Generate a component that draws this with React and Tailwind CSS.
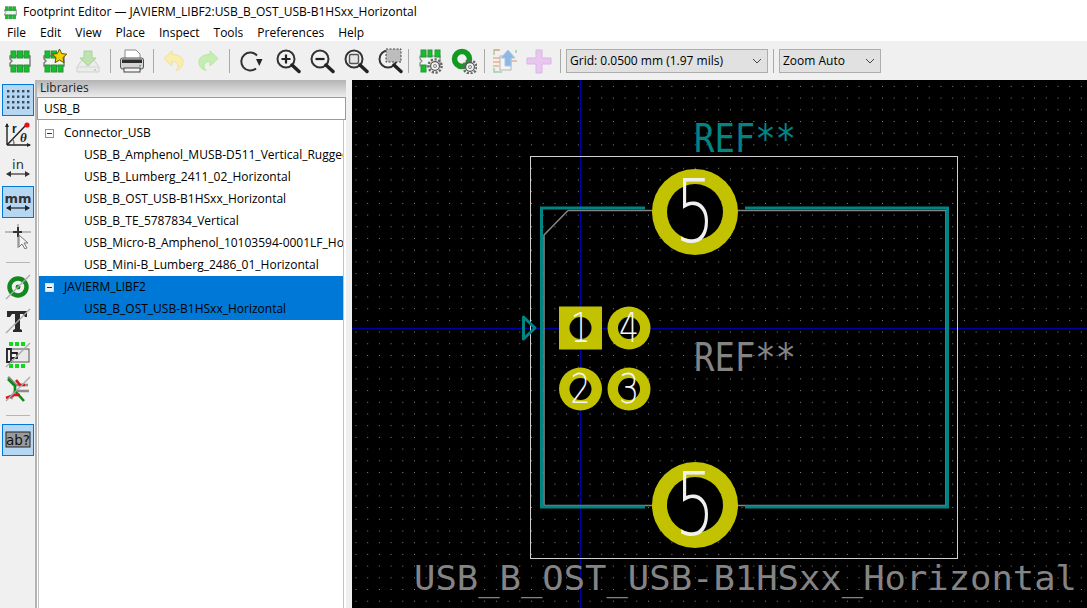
// KiCad footprint editor window
import React from 'react';

const menus = ['File', 'Edit', 'View', 'Place', 'Inspect', 'Tools', 'Preferences', 'Help'];

const rows = [
  { label: 'Connector_USB', lib: true },
  { label: 'USB_B_Amphenol_MUSB-D511_Vertical_Rugged' },
  { label: 'USB_B_Lumberg_2411_02_Horizontal' },
  { label: 'USB_B_OST_USB-B1HSxx_Horizontal' },
  { label: 'USB_B_TE_5787834_Vertical' },
  { label: 'USB_Micro-B_Amphenol_10103594-0001LF_Horizontal' },
  { label: 'USB_Mini-B_Lumberg_2486_01_Horizontal' },
  { label: 'JAVIERM_LIBF2', lib: true, selected: true },
  { label: 'USB_B_OST_USB-B1HSxx_Horizontal', selected: true },
];

function Ico({ children, w = 26, h = 26 }) {
  return <svg width={w} height={h} viewBox="0 0 26 26" fill="none">{children}</svg>;
}

function PadRow({ y, xs = [4, 10.5, 17] }) {
  return xs.map((x) => <rect key={x} x={x} y={y} width="5" height="7" fill="#12c12a" stroke="#2f8f3a" strokeWidth="1" />);
}

function FootprintIcon({ size = 26 }) {
  return (
    <Ico w={size} h={size}>
      <path d="M3 8h20v10H3v-3l2-2-2-2z" fill="#f4f4f4" stroke="#777" strokeWidth="1.4" />
      <PadRow y={3} />
      <PadRow y={17} />
    </Ico>
  );
}

function NewFootprintIcon() {
  return (
    <Ico>
      <path d="M3 8h20v10H3v-3l2-2-2-2z" fill="#f4f4f4" stroke="#777" strokeWidth="1.4" />
      <PadRow y={3} xs={[4, 10.5]} />
      <PadRow y={17} />
      <path d="M18.5 1l2.2 4.6 5 .6-3.7 3.4 1 5-4.5-2.5-4.5 2.5 1-5-3.7-3.4 5-.6z" fill="#f5d300" stroke="#5b5200" strokeWidth="1" />
    </Ico>
  );
}

function SaveIcon() {
  return (
    <Ico>
      <path d="M7 12L2 19v5h22v-5l-5-7z" fill="#ececec" stroke="#cfcfcf" />
      <path d="M2 19h22" stroke="#d5d5d5" />
      <path d="M9 3h8v7h4l-8 8-8-8h4z" fill="#bfe3b0" stroke="#a9d39a" />
      <rect x="19" y="21" width="2" height="1.5" fill="#9edb9e" />
    </Ico>
  );
}

function PrintIcon() {
  return (
    <Ico>
      <path d="M6 11V2h11l4 4v5z" fill="#fff" stroke="#8a8a8a" />
      <rect x="1.5" y="10" width="23" height="11" rx="2" fill="#d4d4d4" stroke="#555" />
      <rect x="3" y="11.5" width="20" height="3.5" fill="#2d2d2d" />
      <rect x="5" y="20" width="16" height="4" fill="#f4f4f4" stroke="#444" />
      <rect x="20" y="17" width="2" height="1.5" fill="#59c559" />
    </Ico>
  );
}

function UndoIcon({ flip, fill, stroke }) {
  return (
    <Ico>
      <g transform={flip ? 'translate(26 0) scale(-1 1)' : undefined}>
        <path d="M11 3L3 10.5l8 7.5v-4.5c4 0 6 2 6 4.5 0 2-1 3.5-2 4.5 4-1 7-4 7-8.5 0-5-5-7.5-11-7.5z" fill={fill} stroke={stroke} strokeWidth="1" />
      </g>
    </Ico>
  );
}

function RotateIcon() {
  return (
    <Ico>
      <path d="M18 7.5A9 9 0 1 0 17 20.5" stroke="#333" strokeWidth="2" />
      <path d="M17 11h6.5l-3.2 7z" fill="#222" />
    </Ico>
  );
}

function LensIcon({ children }) {
  return (
    <Ico>
      <circle cx="11" cy="11" r="8.5" stroke="#333" strokeWidth="2" fill="#f4f4f4" fillOpacity="0.4" />
      <path d="M17 17l7 6.5" stroke="#222" strokeWidth="3.4" strokeLinecap="round" />
      {children}
    </Ico>
  );
}

function Gear({ cx, cy }) {
  return (
    <g>
      <circle cx={cx} cy={cy} r="6.6" stroke="#666" strokeWidth="2.4" strokeDasharray="2.2 1.6" />
      <circle cx={cx} cy={cy} r="4.4" fill="#f4f4f4" stroke="#555" strokeWidth="1.2" />
      <circle cx={cx} cy={cy} r="1.6" fill="#ddd" stroke="#777" strokeWidth="0.8" />
    </g>
  );
}

function FootprintGearIcon() {
  return (
    <Ico>
      <path d="M3 8h20v10H3v-3l2-2-2-2z" fill="#f4f4f4" stroke="#888" strokeWidth="1.2" />
      <rect x="4" y="2" width="5" height="7" fill="#12c12a" stroke="#2f8f3a" />
      <rect x="11" y="2" width="4" height="7" fill="#12c12a" stroke="#2f8f3a" />
      <rect x="18" y="2" width="5" height="7" fill="#12c12a" stroke="#2f8f3a" />
      <rect x="4" y="17" width="5" height="7" fill="#12c12a" stroke="#2f8f3a" />
      <Gear cx={18} cy={18} />
    </Ico>
  );
}

function PadGearIcon() {
  return (
    <Ico>
      <circle cx="11" cy="11" r="7.5" stroke="#109a22" strokeWidth="5.5" />
      <circle cx="11" cy="11" r="2.5" fill="#f0f0f0" />
      <Gear cx={19} cy={19} />
    </Ico>
  );
}

function ImportIcon() {
  return (
    <Ico>
      <path d="M2 7V2h5M24 2v3M2 20v4h8" stroke="#9fd09f" strokeWidth="1.5" />
      <path d="M2 2h6" stroke="#e8a58f" strokeWidth="1.5" />
      <path d="M1 10h8M1 14h8M1 18h6M18 13h7" stroke="#ecae8a" strokeWidth="1.5" />
      <rect x="8" y="8" width="11" height="14" fill="#f4f4f4" stroke="#b5b5b5" />
      <path d="M16 2l7 8h-4v8h-6v-8H9z" fill="#8db8e3" stroke="#a8c6e6" />
    </Ico>
  );
}

function PlusIcon() {
  return (
    <Ico>
      <path d="M10 2h6v8h9v6h-9v9h-6v-9H1v-6h9z" fill="#e8c7ef" stroke="#dcb5e6" />
    </Ico>
  );
}

function Tool({ children }) {
  return <div className="w-[34px] h-[26px] flex items-center justify-center shrink-0">{children}</div>;
}

function Sep({ className = 'mx-[4px]' }) {
  return <div className={`w-px h-[24px] bg-[#a9a9a9] shrink-0 ${className}`} />;
}

function Chevron() {
  return (
    <svg width="10" height="6" viewBox="0 0 10 6" fill="none">
      <path d="M1 1l4 4 4-4" stroke="#444" strokeWidth="1" />
    </svg>
  );
}

function Dropdown({ label, className }) {
  return (
    <div className={`h-[24px] flex items-center justify-between pl-[3px] pr-[5px] bg-[#e1e1e1] border border-[#adadad] text-[12px] text-black shrink-0 ${className}`}>
      <span>{label}</span>
      <Chevron />
    </div>
  );
}

function TopBar() {
  return (
    <div className="h-[39px] bg-[#f0f0f0] flex items-center pl-[3px] shrink-0">
      <Tool><FootprintIcon /></Tool>
      <Tool><NewFootprintIcon /></Tool>
      <Tool><SaveIcon /></Tool>
      <Sep className="ml-[5px] mr-[4px]" />
      <Tool><PrintIcon /></Tool>
      <Sep className="ml-[4px] mr-[3px]" />
      <Tool><UndoIcon fill="#f9eeb0" stroke="#efe09a" /></Tool>
      <Tool><UndoIcon flip fill="#c5efb0" stroke="#b5e5a0" /></Tool>
      <Sep className="ml-[4px] mr-[5px]" />
      <Tool><RotateIcon /></Tool>
      <div className="w-[2px] shrink-0" />
      <Tool>
        <LensIcon>
          <path d="M11 6.5v9M6.5 11h9" stroke="#222" strokeWidth="2.2" />
        </LensIcon>
      </Tool>
      <Tool>
        <LensIcon>
          <path d="M6.5 11h9" stroke="#222" strokeWidth="2.2" />
        </LensIcon>
      </Tool>
      <Tool>
        <LensIcon>
          <rect x="6.5" y="6.5" width="9" height="9" rx="1.5" stroke="#555" strokeWidth="1.4" fill="#e4e4e4" />
        </LensIcon>
      </Tool>
      <Tool>
        <LensIcon>
          <rect x="9" y="1" width="15" height="13" fill="#bdbdbd" stroke="#444" strokeDasharray="2 1.5" />
        </LensIcon>
      </Tool>
      <Sep className="ml-[1px] mr-[4px]" />
      <Tool><FootprintGearIcon /></Tool>
      <Tool><PadGearIcon /></Tool>
      <Sep className="ml-[3px] mr-[3px]" />
      <Tool><ImportIcon /></Tool>
      <Tool><PlusIcon /></Tool>
      <Sep className="ml-[4px] mr-[5px]" />
      <Dropdown label="Grid: 0.0500 mm (1.97 mils)" className="w-[202px]" />
      <Sep className="ml-[5px] mr-[5px]" />
      <Dropdown label="Zoom Auto" className="w-[102px]" />
    </div>
  );
}

function Cut() {
  return <path d="M1 25L25 1" stroke="#a8a8a8" strokeWidth="1.2" />;
}

const sideTools = [
  {
    key: 'grid',
    y: 84,
    active: true,
    el: (
      <Ico>
        {[3, 8.5, 14, 19.5].map((y) => [2, 7, 12, 17, 22].map((x) => <rect key={`${x}-${y}`} x={x} y={y} width="2.4" height="2.4" fill="#3d4a55" />))}
      </Ico>
    ),
  },
  {
    key: 'polar',
    el: (
      <Ico>
        <path d="M2 24V3M2 24h23M2 24L21 4" stroke="#222" strokeWidth="1.4" />
        <path d="M0 6l2-4 2 4zM22 22l4 2-4 2z" fill="#222" />
        <path d="M9 24a8 8 0 0 0-1.5-6" stroke="#444" />
        <circle cx="22" cy="4" r="2.6" fill="#e81010" />
        <text x="7" y="12" fontFamily="'Liberation Sans', sans-serif" fontSize="12" fontWeight="700" fill="#222">r</text>
        <text x="15" y="21" fontFamily="'Liberation Serif', serif" fontSize="13" fontWeight="700" fontStyle="italic" fill="#222">θ</text>
      </Ico>
    ),
  },
  {
    key: 'in',
    el: (
      <Ico>
        <text x="13" y="14" textAnchor="middle" fontFamily="'DejaVu Sans', sans-serif" fontSize="13" fill="#333">in</text>
        <path d="M2 19h22" stroke="#333" strokeWidth="1.2" />
        <path d="M1 19l5-3v6zM25 19l-5-3v6z" fill="#333" />
      </Ico>
    ),
  },
  {
    key: 'mm',
    active: true,
    el: (
      <Ico>
        <text x="13" y="14" textAnchor="middle" fontFamily="'DejaVu Sans', sans-serif" fontSize="13" fontWeight="700" fill="#333">mm</text>
        <path d="M2 19h22" stroke="#222" strokeWidth="1.2" />
        <path d="M1 19l5-3v6zM25 19l-5-3v6z" fill="#222" />
      </Ico>
    ),
  },
  {
    key: 'cursor',
    el: (
      <Ico>
        <path d="M0 9h8M17 9h9M13 1v5M13 14v11" stroke="#aaa" strokeWidth="1.6" />
        <path d="M13 4v10M8 9h9" stroke="#333" strokeWidth="2" />
        <path d="M14 12v12l3-3 3 5 2-1-3-5h4z" fill="#f4f4f4" stroke="#777" />
      </Ico>
    ),
  },
  { key: 'sep1', sep: true },
  {
    key: 'pad',
    el: (
      <Ico>
        <circle cx="13" cy="13" r="8.5" stroke="#13881f" strokeWidth="4.5" />
        <circle cx="13" cy="13" r="3" fill="#13881f" stroke="#f0f0f0" strokeWidth="1" />
        <Cut />
      </Ico>
    ),
  },
  {
    key: 'text',
    el: (
      <Ico>
        <path d="M2 3h20v6h-2l-2-3h-3v15l2 1v2H8v-2l2-1V6H7L5 9H2z" fill="#2a2a2a" />
        <Cut />
      </Ico>
    ),
  },
  {
    key: 'fp',
    el: (
      <Ico>
        {[3, 9, 15].map((x) => <rect key={x} x={x + 1} y="0" width="4" height="4" fill="#10d81c" />)}
        {[3, 9, 15].map((x) => <rect key={`b${x}`} x={x + 1} y="22" width="4" height="4" fill="#10d81c" />)}
        <rect x="2" y="7" width="22" height="13" fill="#e8e8e8" stroke="#555" />
        <path d="M2 7h4v13H2zM6 11h6v5H6z" fill="#f2f2f2" stroke="#222" strokeWidth="1.8" />
        <Cut />
      </Ico>
    ),
  },
  {
    key: 'cross',
    el: (
      <Ico>
        <path d="M3 1l8 8h6l6 0M14 15h4l6 0M6 23l4-8h5" stroke="#8c8c8c" strokeWidth="2.6" />
        <path d="M3 3l7 7v5l9 10" stroke="#0e8a17" strokeWidth="2.6" />
        <path d="M11 4l4 5h5M1 22l8-3h6" stroke="#d81818" strokeWidth="2.6" />
        <Cut />
      </Ico>
    ),
  },
  { key: 'sep2', sep: true },
  {
    key: 'ab',
    active: true,
    el: (
      <Ico>
        <rect x="1" y="5" width="24" height="15" fill="#9a9a9a" stroke="#222" />
        <text x="13" y="18" textAnchor="middle" fontFamily="'DejaVu Sans', sans-serif" fontSize="13.5" fill="#111">ab?</text>
      </Ico>
    ),
  },
];

function SideBar() {
  return (
    <div className="w-[35px] bg-[#f0f0f0] flex flex-col items-center pt-[4px] shrink-0 border-r-0">
      {sideTools.map((t) => {
        if (t.sep) return <div key={t.key} className="w-[24px] h-px bg-[#b5b5b5] my-[8px] ml-[1px]" />;
        return (
          <div
            key={t.key}
            className={`w-[32px] h-[32px] mb-[2px] flex items-center justify-center shrink-0 border ${t.active ? 'bg-[#b5d7f3] border-[#0078d7]' : 'border-transparent'}`}
          >
            {t.el}
          </div>
        );
      })}
    </div>
  );
}

function TreeRow({ label, lib, selected }) {
  return (
    <div className={`h-[22px] flex items-center whitespace-nowrap overflow-hidden text-[12px] text-black ${selected ? 'bg-[#0078d7]' : ''} ${lib ? 'pl-[6px]' : 'pl-[45px]'}`}>
      {lib && (
        <span className={`w-[9px] h-[9px] border flex items-center justify-center mr-[10px] shrink-0 ${selected ? 'border-[#d8d8d8] bg-[#f0f0f0]' : 'border-[#8a94a6] bg-white'}`}>
          <span className="w-[5px] h-px bg-[#333]" />
        </span>
      )}
      {label}
    </div>
  );
}

function LibraryPanel() {
  return (
    <div className="w-[309px] flex flex-col bg-white shrink-0">
      <div className="h-[17px] bg-gradient-to-b from-[#b4b4b4] to-[#ececec] text-[12px] text-[#222] pl-[3px] leading-[15px]">Libraries</div>
      <div className="h-[23px] border border-[#9a9a9a] bg-white flex items-center pl-[6px] text-[12px] text-black">USB_B</div>
      <div className="flex-1 mr-[2px] ml-px pt-[2px] border-x border-[#c4c4c4] overflow-hidden">
        {rows.map((r, i) => <TreeRow key={i} {...r} />)}
      </div>
    </div>
  );
}

const stroke = { fontFamily: "'DejaVu Sans Mono', monospace" };

function BigPad({ cy }) {
  return (
    <g>
      <circle cx="695" cy={cy} r="43" fill="#c2c200" />
      <circle cx="695" cy={cy} r="28" fill="#000" />
      <text x="695" y={cy + 30} textAnchor="middle" fontFamily="'DejaVu Sans', sans-serif" fontWeight="200" fontSize="88" fill="#f0f0f0" textLength="40" lengthAdjust="spacingAndGlyphs">5</text>
    </g>
  );
}

function SmallPad({ cx, cy, n, square }) {
  return (
    <g>
      {square
        ? <rect x={cx - 21.5} y={cy - 21.5} width="43" height="43" fill="#c2c200" />
        : <circle cx={cx} cy={cy} r="21.5" fill="#c2c200" />}
      <circle cx={cx} cy={cy} r="11" fill="#000" />
      <text x={cx} y={cy + 14} textAnchor="middle" fontFamily="'DejaVu Sans', sans-serif" fontWeight="200" fontSize="40" fill="#f5f5f5" textLength="20" lengthAdjust="spacingAndGlyphs">{n}</text>
    </g>
  );
}

function Canvas() {
  return (
    <div className="flex-1 bg-black overflow-hidden">
      <svg width="735" height="528" viewBox="352 80 735 528" className="block">
        <defs>
          <pattern id="grid" x="519.3" y="121" width="11.7" height="11.7" patternUnits="userSpaceOnUse">
            <rect width="1" height="1" fill="#8a8a8a" shapeRendering="crispEdges" />
          </pattern>
        </defs>
        <rect x="352" y="80" width="735" height="528" fill="url(#grid)" />
        <path d="M580.5 80V608M352 328.5H1087" stroke="#0000a8" strokeWidth="1" />
        <rect x="530.5" y="156.5" width="427" height="402" stroke="#d0d0d0" fill="none" />
        {/* fab layer */}
        <path d="M568 210.5H946V505.5H544V235L568 210.5" stroke="#848484" strokeWidth="1.6" fill="none" />
        {/* silkscreen */}
        <path d="M645 208H541.5V507H645M745 208H947.5V507H745" stroke="#008484" strokeWidth="3" fill="none" />
        <path d="M523.5 317L535 328L523.5 339Z" stroke="#008484" strokeWidth="3" fill="none" strokeLinejoin="round" />
        <BigPad cy={212} />
        <BigPad cy={505} />
        <SmallPad cx={580.5} cy={328} n="1" square />
        <SmallPad cx={629} cy={328} n="4" />
        <SmallPad cx={580.5} cy={389} n="2" />
        <SmallPad cx={629} cy={389} n="3" />
        <text x="694" y="152" {...stroke} fontSize="39" fill="#008484" textLength="102" lengthAdjust="spacingAndGlyphs">REF**</text>
        <text x="694" y="371" {...stroke} fontSize="39" fill="#848484" textLength="102" lengthAdjust="spacingAndGlyphs">REF**</text>
        <text x="414" y="590" {...stroke} fontSize="34" fill="#848484" textLength="663" lengthAdjust="spacingAndGlyphs">USB_B_OST_USB-B1HSxx_Horizontal</text>
      </svg>
    </div>
  );
}

export default function App() {
  return (
    <div className="w-[1087px] h-[608px] flex flex-col overflow-hidden bg-white font-['Open_Sans',sans-serif]">
      <div className="h-[24px] flex items-center pl-[3px] gap-[5px] text-[12px] text-black shrink-0">
        <FootprintIcon size={15} />
        <span>Footprint Editor — JAVIERM_LIBF2:USB_B_OST_USB-B1HSxx_Horizontal</span>
      </div>
      <div className="h-[17px] flex items-center text-[12px] text-black pl-[7px] gap-[14px] shrink-0">
        {menus.map((m) => <span key={m}>{m}</span>)}
      </div>
      <TopBar />
      <div className="flex-1 flex min-h-0">
        <SideBar />
        <div className="w-[2px] bg-[#b4b4b4] shrink-0" />
        <LibraryPanel />
        <div className="w-[6px] bg-[#f0f0f0] shrink-0" />
        <Canvas />
      </div>
    </div>
  );
}
